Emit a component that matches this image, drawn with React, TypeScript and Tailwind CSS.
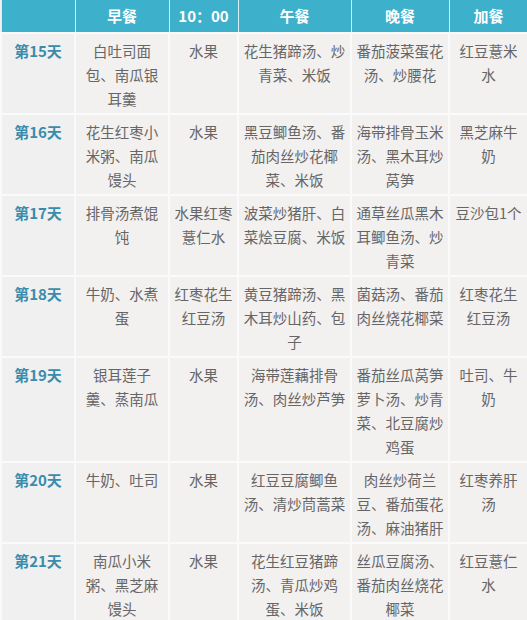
import React from "react";

const headers = ["", "早餐", "10：00", "午餐", "晚餐", "加餐"];

const rows: string[][] = [
  ["第15天", "白吐司面包、南瓜银耳羹", "水果", "花生猪蹄汤、炒青菜、米饭", "番茄菠菜蛋花汤、炒腰花", "红豆薏米水"],
  ["第16天", "花生红枣小米粥、南瓜馒头", "水果", "黑豆鲫鱼汤、番茄肉丝炒花椰菜、米饭", "海带排骨玉米汤、黑木耳炒莴笋", "黑芝麻牛奶"],
  ["第17天", "排骨汤煮馄饨", "水果红枣薏仁水", "波菜炒猪肝、白菜烩豆腐、米饭", "通草丝瓜黑木耳鲫鱼汤、炒青菜", "豆沙包1个"],
  ["第18天", "牛奶、水煮蛋", "红枣花生红豆汤", "黄豆猪蹄汤、黑木耳炒山药、包子", "菌菇汤、番茄肉丝烧花椰菜", "红枣花生红豆汤"],
  ["第19天", "银耳莲子羹、蒸南瓜", "水果", "海带莲藕排骨汤、肉丝炒芦笋", "番茄丝瓜莴笋萝卜汤、炒青菜、北豆腐炒鸡蛋", "吐司、牛奶"],
  ["第20天", "牛奶、吐司", "水果", "红豆豆腐鲫鱼汤、清炒茼蒿菜", "肉丝炒荷兰豆、番茄蛋花汤、麻油猪肝", "红枣养肝汤"],
  ["第21天", "南瓜小米粥、黑芝麻馒头", "水果", "花生红豆猪蹄汤、青瓜炒鸡蛋、米饭", "丝瓜豆腐汤、番茄肉丝烧花椰菜", "红豆薏仁水"],
];

export default function App() {
  return (
    <div
      className="w-[527px] h-[620px] overflow-hidden bg-[#f2efef]"
      style={{ fontFamily: '"Noto Sans CJK SC", "Noto Sans", sans-serif' }}
    >
      <table className="w-[527px] table-fixed border-collapse">
        <colgroup>
          <col className="w-[74px]" />
          <col className="w-[94px]" />
          <col className="w-[69px]" />
          <col className="w-[113px]" />
          <col className="w-[98px]" />
          <col className="w-[79px]" />
        </colgroup>
        <thead>
          <tr className="h-[32px] bg-[#3db0cc]">
            {headers.map((h, i) => (
              <th
                key={i}
                className="border-x border-white/80 p-0 text-center text-[15px] font-bold leading-[32px] text-white"
              >
                {h}
              </th>
            ))}
          </tr>
        </thead>
        <tbody>
          {rows.map((r, ri) => (
            <tr key={ri}>
              {r.map((c, ci) => (
                <td
                  key={ci}
                  className={
                    ci === 0
                      ? "border-2 border-[#fbfafa] bg-[#f1f0f0] px-[3px] pt-[5px] pb-[2px] align-top text-center text-[15px] font-bold leading-[24px] text-[#3a8cad]"
                      : "border-2 border-[#fbfafa] bg-[#f3f0f0] px-[3px] pt-[5px] pb-[2px] align-top text-center text-[14.5px] leading-[24px] text-[#666666]"
                  }
                >
                  {c}
                </td>
              ))}
            </tr>
          ))}
        </tbody>
      </table>
    </div>
  );
}
